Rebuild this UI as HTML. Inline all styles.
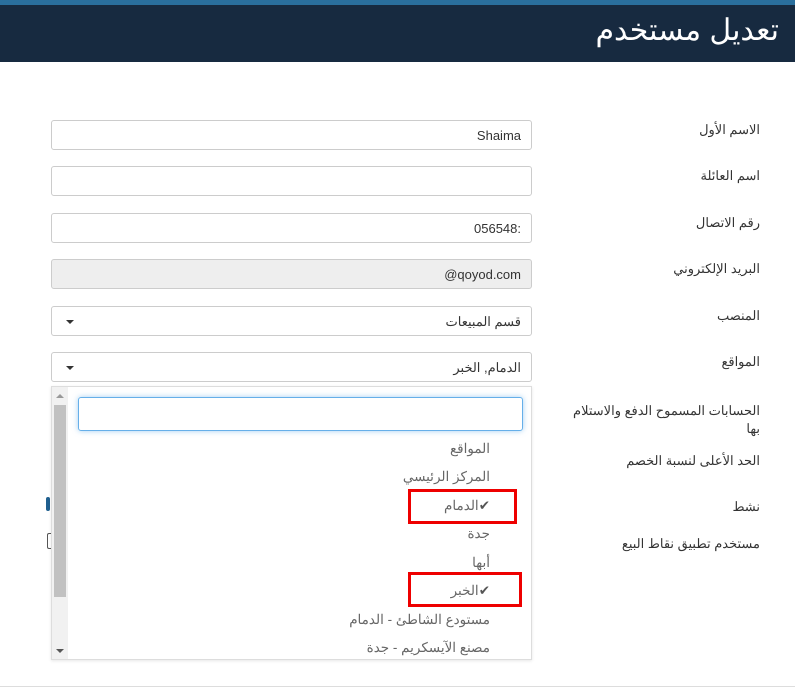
<!DOCTYPE html>
<html><head><meta charset="utf-8"><style>
body{margin:0;width:795px;height:689px;background:#fff;position:relative;overflow:hidden;font-family:"Liberation Sans","Noto Sans CJK SC",sans-serif;}
.a{position:absolute}
.hdr{left:0;top:0;width:795px;height:62px;background:#172a40}
.str{left:0;top:0;width:795px;height:5px;background:#2a6f9d}
.ttl{right:16px;top:13px;color:#fff;font-size:30px;direction:rtl}
.lbl{right:35px;font-size:13px;color:#333;direction:rtl;text-align:right;width:200px}
.inp{left:51px;width:481px;height:30px;border:1px solid #ccc;border-radius:3px;background:#fff;box-sizing:border-box}
.txt{right:10px;top:7px;font-size:13px;color:#333;position:absolute;direction:rtl}
.car{position:absolute;left:14px;top:13px;border-left:4px solid transparent;border-right:4px solid transparent;border-top:4px solid #333}
.it{right:305px;font-size:13.5px;color:#666;direction:rtl}
.it b{color:#555;font-weight:normal}
.rb{border:3px solid #e00;box-sizing:border-box}
</style></head><body>
<div class="a hdr"></div><div class="a str"></div>
<div class="a ttl">تعديل مستخدم</div>

<div class="a lbl" style="top:122px">الاسم الأول</div>
<div class="a lbl" style="top:168px">اسم العائلة</div>
<div class="a lbl" style="top:215px">رقم الاتصال</div>
<div class="a lbl" style="top:261px">البريد الإلكتروني</div>
<div class="a lbl" style="top:308px">المنصب</div>
<div class="a lbl" style="top:354px">المواقع</div>
<div class="a lbl" style="top:402px;line-height:18px">الحسابات المسموح الدفع والاستلام بها</div>
<div class="a lbl" style="top:453px">الحد الأعلى لنسبة الخصم</div>
<div class="a lbl" style="top:499px">نشط</div>
<div class="a lbl" style="top:536px">مستخدم تطبيق نقاط البيع</div>

<div class="a inp" style="top:120px"><span class="txt">Shaima</span></div>
<div class="a inp" style="top:166px"></div>
<div class="a inp" style="top:213px"><span class="txt" style="direction:ltr">056548:</span></div>
<div class="a inp" style="top:259px;background:#eee"><span class="txt" style="direction:ltr">@qoyod.com</span></div>
<div class="a inp" style="top:306px"><span class="txt">قسم المبيعات</span><span class="car"></span></div>
<div class="a inp" style="top:352px"><span class="txt">الدمام, الخبر</span><span class="car"></span></div>

<div class="a" style="left:46px;top:497px;width:4px;height:14px;background:#1f5f8f;border-radius:2px"></div>
<div class="a" style="left:47px;top:533px;width:3px;height:14px;border:1px solid #555;border-right:none;border-radius:2px 0 0 2px"></div>

<div class="a" style="left:51px;top:386px;width:481px;height:274px;border:1px solid #ddd;box-sizing:border-box;background:#fff;box-shadow:0 1px 3px rgba(0,0,0,.1)">
  <div class="a" style="left:0;top:0;width:16px;height:272px;background:#f1f1f1"></div>
  <div class="a" style="left:2px;top:18px;width:12px;height:192px;background:#c1c1c1"></div>
  <div class="a" style="left:4px;top:7px;border-left:4px solid transparent;border-right:4px solid transparent;border-bottom:4px solid #999"></div>
  <div class="a" style="left:4px;top:262px;border-left:4px solid transparent;border-right:4px solid transparent;border-top:4px solid #555"></div>
  <div class="a" style="left:26px;top:10px;width:445px;height:34px;border:1px solid #66afe9;border-radius:3px;box-sizing:border-box;box-shadow:0 0 6px rgba(102,175,233,.6)"></div>
</div>
<div class="a it" style="top:441px">المواقع</div>
<div class="a it" style="top:469px">المركز الرئيسي</div>
<div class="a it" style="top:498px"><b>✔</b>الدمام</div>
<div class="a it" style="top:526px">جدة</div>
<div class="a it" style="top:555px">أبها</div>
<div class="a it" style="top:583px"><b>✔</b>الخبر</div>
<div class="a it" style="top:612px">مستودع الشاطئ - الدمام</div>
<div class="a it" style="top:640px">مصنع الآيسكريم - جدة</div>
<div class="a rb" style="left:408px;top:489px;width:109px;height:35px"></div>
<div class="a rb" style="left:408px;top:572px;width:114px;height:35px"></div>

<div class="a" style="left:0;top:686px;width:795px;height:1px;background:#ddd"></div>
</body></html>
